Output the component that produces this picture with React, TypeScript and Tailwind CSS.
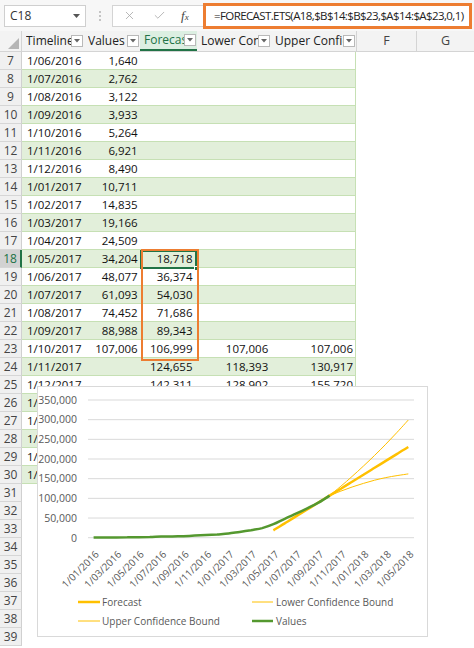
import React from 'react';
import { X, Check } from 'lucide-react';

// month index 0 = Jan 2016, row 2 holds month 0
const values = [300, 560, 820, 1080, 1350, 1640, 2762, 3122, 3933, 5264, 6921, 8490, 10711, 14835, 19166, 24509, 34204, 48077, 61093, 74452, 88988, 107006];
const margins = [0, 6262, 13409, 22000, 31500, 42500, 55000, 68500];

const forecast = (m: number) => Math.round(18718 + (m - 16) * 17656.2);
const fmt = (n: number) => n.toLocaleString('en-US');
const dateLabel = (m: number) => {
  const mm = (m % 12) + 1;
  const yy = 2016 + Math.floor(m / 12);
  return `1/${mm < 10 ? '0' + mm : mm}/${yy}`;
};

type Row = { n: number; a?: string; b?: string; c?: string; d?: string; e?: string; table: boolean };

const rows: Row[] = [];
for (let n = 7; n <= 39; n++) {
  const m = n - 2;
  if (n > 30) {
    rows.push({ n, table: false });
    continue;
  }
  const r: Row = { n, table: true, a: dateLabel(m) };
  if (m < values.length) r.b = fmt(values[m]);
  if (m >= 16) r.c = fmt(m === 19 ? 71686 : forecast(m));
  if (m === 21) {
    r.d = fmt(107006);
    r.e = fmt(107006);
  } else if (m > 21) {
    const f = forecast(m);
    r.d = fmt(f - margins[m - 21]);
    r.e = fmt(f + margins[m - 21]);
  }
  rows.push(r);
}

// chart geometry (svg coords)
const X0 = 55.6;
const DX = 11.24;
const Y0 = 150.7;
const YS = 137.7 / 350000;
const px = (m: number) => X0 + m * DX;
const py = (v: number) => Y0 - v * YS;

function smooth(pts: [number, number][]) {
  let d = `M${pts[0][0].toFixed(1)},${pts[0][1].toFixed(1)}`;
  for (let i = 0; i < pts.length - 1; i++) {
    const p0 = pts[i - 1] || pts[i];
    const p1 = pts[i];
    const p2 = pts[i + 1];
    const p3 = pts[i + 2] || p2;
    const c1x = p1[0] + (p2[0] - p0[0]) / 6;
    const c1y = p1[1] + (p2[1] - p0[1]) / 6;
    const c2x = p2[0] - (p3[0] - p1[0]) / 6;
    const c2y = p2[1] - (p3[1] - p1[1]) / 6;
    d += ` C${c1x.toFixed(1)},${c1y.toFixed(1)} ${c2x.toFixed(1)},${c2y.toFixed(1)} ${p2[0].toFixed(1)},${p2[1].toFixed(1)}`;
  }
  return d;
}

const valuePts = values.map((v, m) => [px(m), py(v)] as [number, number]);
const forecastPts: [number, number][] = [];
for (let m = 16; m <= 28; m++) forecastPts.push([px(m), py(forecast(m))]);
const lowerPts: [number, number][] = [];
const upperPts: [number, number][] = [];
for (let m = 21; m <= 28; m++) {
  const f = m === 21 ? 107006 : forecast(m);
  lowerPts.push([px(m), py(f - margins[m - 21])]);
  upperPts.push([px(m), py(f + margins[m - 21])]);
}

const yTicks = [350000, 300000, 250000, 200000, 150000, 100000, 50000, 0];

function Chart() {
  return (
    <div className="absolute left-[37px] top-[386px] w-[391px] h-[251px] border border-[#d9d9d9] bg-white">
      <svg width="389" height="249" className="block">
        {yTicks.map((t) => (
          <g key={t}>
            <line x1="50" x2="376" y1={py(t)} y2={py(t)} stroke="#d9d9d9" strokeWidth="1" />
            <text x="39" y={py(t) + 3.8} textAnchor="end" fontSize="10.5" fill="#595959">
              {t === 0 ? '0' : fmt(t)}
            </text>
          </g>
        ))}
        {Array.from({ length: 15 }, (_, i) => i * 2).map((m) => {
          const ax = px(m) + 6;
          const ay = 168;
          return (
            <text key={m} x={ax} y={ay} textAnchor="end" fontSize="10" fill="#595959" transform={`rotate(-45 ${ax} ${ay})`}>
              {dateLabel(m)}
            </text>
          );
        })}
        <path d={smooth(upperPts)} fill="none" stroke="#ffc000" strokeWidth="1" />
        <path d={smooth(lowerPts)} fill="none" stroke="#ffc000" strokeWidth="1" />
        <path d={smooth(forecastPts)} fill="none" stroke="#ffc000" strokeWidth="2.5" />
        <path d={smooth(valuePts)} fill="none" stroke="#54982f" strokeWidth="2.5" />

        {/* legend */}
        <line x1="40" x2="62" y1="215" y2="215" stroke="#ffc000" strokeWidth="2.5" />
        <text x="64" y="218.5" fontSize="10" fill="#595959">Forecast</text>
        <line x1="214" x2="235" y1="215" y2="215" stroke="#ffc000" strokeWidth="1" />
        <text x="238" y="218.5" fontSize="10" fill="#595959">Lower Confidence Bound</text>
        <line x1="40" x2="62" y1="234" y2="234" stroke="#ffc000" strokeWidth="1" />
        <text x="64" y="237.5" fontSize="10" fill="#595959">Upper Confidence Bound</text>
        <line x1="214" x2="235" y1="234" y2="234" stroke="#54982f" strokeWidth="2.5" />
        <text x="238" y="237.5" fontSize="10" fill="#595959">Values</text>
      </svg>
    </div>
  );
}

function FilterButton() {
  return (
    <span className="shrink-0 w-[12px] h-[12px] border border-[#b9b9b9] bg-white flex items-center justify-center mr-[1px]">
      <svg width="6" height="4" viewBox="0 0 6 4">
        <path d="M0 0 L6 0 L3 3.5 Z" fill="#666" />
      </svg>
    </span>
  );
}

function HeaderCell({ label, width, selected }: { label: string; width: string; selected?: boolean }) {
  return (
    <div
      className={`${width} shrink-0 h-full flex items-center pl-[4px] ${selected ? 'bg-[#dcefe2] border-b-2 border-[#217346] text-[#217346]' : 'text-[#222]'}`}
    >
      <span className="flex-1 min-w-0 overflow-hidden whitespace-nowrap text-[12px] leading-none">{label}</span>
      <FilterButton />
    </div>
  );
}

export default function App() {
  return (
    <div className="relative w-[474px] h-[648px] overflow-hidden bg-white font-['Open_Sans','Noto_Sans',sans-serif]">
      {/* Formula bar */}
      <div className="h-[31px] flex items-center bg-[#f7f7f7]">
        <div className="shrink-0 ml-[4px] w-[82px] h-[22px] border border-[#cfcfcf] bg-white flex items-center justify-between pl-[5px] pr-[5px]">
          <span className="text-[12px] text-[#333]">C18</span>
          <svg width="7" height="4" viewBox="0 0 7 4">
            <path d="M0 0 L7 0 L3.5 4 Z" fill="#555" />
          </svg>
        </div>
        <div className="shrink-0 ml-[13px] flex flex-col gap-[2px]">
          <span className="w-[2px] h-[2px] bg-[#c4c4c4]" />
          <span className="w-[2px] h-[2px] bg-[#c4c4c4]" />
          <span className="w-[2px] h-[2px] bg-[#c4c4c4]" />
        </div>
        <div className="shrink-0 ml-[11px] h-[22px] w-[91px] border border-r-0 border-[#d4d4d4] bg-white flex items-center">
          <X className="ml-[10px] w-[13px] h-[13px] text-[#a8a8a8]" strokeWidth={1.5} />
          <Check className="ml-[17px] w-[13px] h-[13px] text-[#a8a8a8]" strokeWidth={1.5} />
          <span className="ml-[15px] italic font-['Liberation_Serif',serif] text-[13px] text-[#444] leading-none">
            f<span className="text-[9px]">x</span>
          </span>
        </div>
        <div className="h-[26px] flex-1 min-w-0 overflow-hidden mr-[2px] border-[3px] border-[#ed7d31] bg-white flex items-center pl-[8px]">
          <span className="text-[11.5px] tracking-[-0.6px] text-[#222] whitespace-nowrap">=FORECAST.ETS(A18,$B$14:$B$23,$A$14:$A$23,0,1)</span>
        </div>
      </div>

      {/* Column headers (table header row) */}
      <div className="h-[21px] flex bg-[#f3f3f3] border-b border-[#d4d4d4]">
        <div className="w-[22px] shrink-0 h-full relative border-r border-[#d4d4d4]">
          <span className="absolute right-[2px] bottom-[2px] w-0 h-0 border-l-[11px] border-l-transparent border-b-[11px] border-b-[#b5b5b5]" />
        </div>
        <HeaderCell label="Timeline" width="w-[62px]" />
        <HeaderCell label="Values" width="w-[56px]" />
        <HeaderCell label="Forecast" width="w-[57px]" selected />
        <HeaderCell label="Lower Confidence Bound" width="w-[74px]" />
        <HeaderCell label="Upper Confidence Bound" width="w-[85px]" />
        <div className="w-[60px] shrink-0 h-full flex items-center justify-center text-[12.5px] text-[#444] border-l border-[#d4d4d4]">F</div>
        <div className="flex-1 h-full flex items-center justify-center text-[12.5px] text-[#444] border-l border-[#d4d4d4]">G</div>
      </div>

      {/* Rows */}
      <div className="flex flex-col">
        {rows.map((r) => {
          const sel = r.n === 18;
          const green = r.table && r.n % 2 === 0;
          return (
            <div key={r.n} className="h-[18px] flex text-[11.5px] text-[#111]">
              <div
                className={`w-[22px] shrink-0 h-full flex items-center justify-center border-b border-[#d6d6d6] text-[12px] ${
                  sel ? 'bg-[#d2d2d2] text-[#217346] border-r-2 border-r-[#217346]' : 'bg-[#f0f0f0] text-[#444] border-r border-r-[#d0d0d0]'
                }`}
              >
                {r.n}
              </div>
              {r.table ? (
                <div className={`w-[334px] shrink-0 h-full flex border-b border-r border-[#c6e0b4] ${green ? 'bg-[#e2efda]' : 'bg-white'}`}>
                  <div className="w-[62px] flex items-center pl-[5px] whitespace-nowrap overflow-hidden">{r.a}</div>
                  <div className="w-[56px] flex items-center justify-end pr-[2px]">{r.b}</div>
                  <div className="w-[57px] flex items-center justify-end pr-[4px]">{r.c}</div>
                  <div className="w-[74px] flex items-center justify-end pr-[2px]">{r.d}</div>
                  <div className="w-[85px] flex items-center justify-end pr-[2px]">{r.e}</div>
                </div>
              ) : null}
            </div>
          );
        })}
      </div>

      {/* active cell C18 */}
      <div className="absolute left-[140px] top-[250px] w-[57px] h-[19px] border-2 border-[#217346]" />
      <div className="absolute left-[194px] top-[266px] w-[5px] h-[5px] bg-[#217346] border border-white" />

      {/* annotation box around forecast C18:C23 */}
      <div className="absolute left-[141px] top-[249px] w-[58px] h-[112px] border-2 border-[#ed7d31]" />

      <Chart />
    </div>
  );
}
